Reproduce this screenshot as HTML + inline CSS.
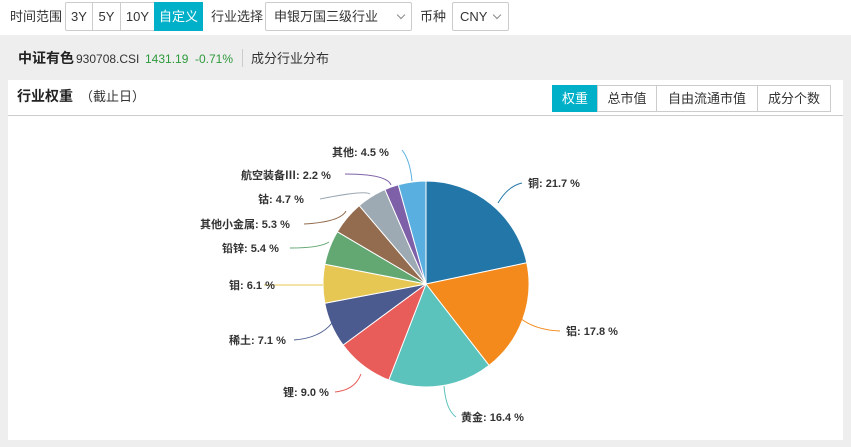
<!DOCTYPE html>
<html><head><meta charset="utf-8"><style>
*{margin:0;padding:0;box-sizing:border-box}
body{width:851px;height:447px;background:#eee;font-family:"Liberation Sans","Noto Sans CJK SC",sans-serif;color:#333;position:relative;overflow:hidden}
.top{position:absolute;left:0;top:0;width:851px;height:35px;background:#fff}
.a{position:absolute;white-space:nowrap}
.t{font-size:13px;line-height:16px}
.box{position:absolute;border:1px solid #ccc;background:#fff;font-size:13px;text-align:center}
.on{background:#00b0c8;color:#fff;border-color:#00b0c8}
.chev{position:absolute;width:6px;height:6px;border-right:1px solid #888;border-bottom:1px solid #888;transform:rotate(45deg)}
svg text{font-size:11px;font-weight:bold;fill:#333;font-family:"Liberation Sans","Noto Sans CJK SC",sans-serif}
</style></head><body>
<div class="top"></div>
<span class="a t" style="left:10px;top:9px">时间范围</span>
<div class="box" style="left:65px;top:2px;width:28px;height:29px;line-height:27px;border-radius:2px 0 0 2px">3Y</div>
<div class="box" style="left:92px;top:2px;width:29px;height:29px;line-height:27px">5Y</div>
<div class="box" style="left:120px;top:2px;width:35px;height:29px;line-height:27px">10Y</div>
<div class="box on" style="left:154px;top:2px;width:49px;height:29px;line-height:27px">自定义</div>
<span class="a t" style="left:211px;top:9px">行业选择</span>
<div class="box" style="left:265px;top:2px;width:147px;height:29px;line-height:27px;text-align:left;padding-left:8px;border-radius:2px">申银万国三级行业<span class="chev" style="left:132px;top:9px"></span></div>
<span class="a t" style="left:420px;top:9px">币种</span>
<div class="box" style="left:452px;top:2px;width:57px;height:29px;line-height:27px;text-align:left;padding-left:7px;border-radius:2px">CNY<span class="chev" style="left:41px;top:9px"></span></div>

<span class="a" style="left:18px;top:49px;font-size:14px;font-weight:bold;color:#222;line-height:18px">中证有色</span>
<span class="a" style="left:76px;top:51px;font-size:12px;line-height:16px">930708.CSI</span>
<span class="a" style="left:145px;top:51px;font-size:12px;line-height:16px;color:#2e9a3c">1431.19</span>
<span class="a" style="left:195px;top:51px;font-size:12px;line-height:16px;color:#2e9a3c">-0.71%</span>
<div class="a" style="left:242px;top:49px;width:1px;height:18px;background:#ccc"></div>
<span class="a t" style="left:251px;top:51px">成分行业分布</span>

<div class="a" style="left:8px;top:80px;width:835px;height:360px;background:#fff"></div>
<div class="a" style="left:8px;top:115px;width:835px;height:1px;background:#ccc"></div>
<span class="a" style="left:17px;top:87px;font-size:14px;font-weight:bold;color:#222;line-height:18px">行业权重</span>
<span class="a t" style="left:80px;top:89px">（截止日）</span>
<div class="box on" style="left:552px;top:85px;width:46px;height:27px;line-height:25px">权重</div>
<div class="box" style="left:597px;top:85px;width:60px;height:27px;line-height:25px">总市值</div>
<div class="box" style="left:656px;top:85px;width:102px;height:27px;line-height:25px">自由流通市值</div>
<div class="box" style="left:757px;top:85px;width:74px;height:27px;line-height:25px">成分个数</div>

<svg style="position:absolute;left:0;top:0" width="851" height="447">
<g stroke="#fff" stroke-width="1">
<path d="M426,284 L426,181 A103,103 0 0 1 526.8,262.8Z" fill="#2276a8"/>
<path d="M426,284 L526.8,262.8 A103,103 0 0 1 489.1,365.4Z" fill="#f58a1c"/>
<path d="M426,284 L489.1,365.4 A103,103 0 0 1 388.8,380Z" fill="#5cc2bc"/>
<path d="M426,284 L388.8,380 A103,103 0 0 1 343.1,345.1Z" fill="#e85d59"/>
<path d="M426,284 L343.1,345.1 A103,103 0 0 1 324.8,303.3Z" fill="#4b5a8f"/>
<path d="M426,284 L324.8,303.3 A103,103 0 0 1 324.9,264.2Z" fill="#e7c753"/>
<path d="M426,284 L324.9,264.2 A103,103 0 0 1 337.3,231.7Z" fill="#63a873"/>
<path d="M426,284 L337.3,231.7 A103,103 0 0 1 359.2,205.6Z" fill="#936c4f"/>
<path d="M426,284 L359.2,205.6 A103,103 0 0 1 384.9,189.5Z" fill="#9eaab3"/>
<path d="M426,284 L384.9,189.5 A103,103 0 0 1 398.3,184.8Z" fill="#7d60a8"/>
<path d="M426,284 L398.3,184.8 A103,103 0 0 1 426,181Z" fill="#59b0e0"/>
</g>
<g fill="none" stroke-width="1">
<path d="M498,203 Q508,186 522,183" stroke="#2276a8"/>
<path d="M520,318 Q535,330 560,331" stroke="#f58a1c"/>
<path d="M444,386 Q446,410 456,417" stroke="#5cc2bc"/>
<path d="M361,374 Q355,390 335,392" stroke="#e85d59"/>
<path d="M332,323 Q320,338 294,340" stroke="#4b5a8f"/>
<path d="M323,285 L264,285" stroke="#e7c753"/>
<path d="M329,242 Q320,248 290,248" stroke="#63a873"/>
<path d="M346,211 Q340,222 304,224" stroke="#936c4f"/>
<path d="M370,194 Q365,190 320,199" stroke="#9eaab3"/>
<path d="M391,185 Q387,174 345,174" stroke="#7d60a8"/>
<path d="M412,181 Q410,160 402,150" stroke="#59b0e0"/>
</g>
<text x="528" y="187">铜: 21.7 %</text>
<text x="566" y="335">铝: 17.8 %</text>
<text x="461" y="421">黄金: 16.4 %</text>
<text x="283" y="396">锂: 9.0 %</text>
<text x="229" y="344">稀土: 7.1 %</text>
<text x="229" y="289">钼: 6.1 %</text>
<text x="222" y="252">铅锌: 5.4 %</text>
<text x="200" y="228">其他小金属: 5.3 %</text>
<text x="258" y="203">钴: 4.7 %</text>
<text x="241" y="179">航空装备Ⅲ: 2.2 %</text>
<text x="332" y="156">其他: 4.5 %</text>
</svg>
</body></html>
